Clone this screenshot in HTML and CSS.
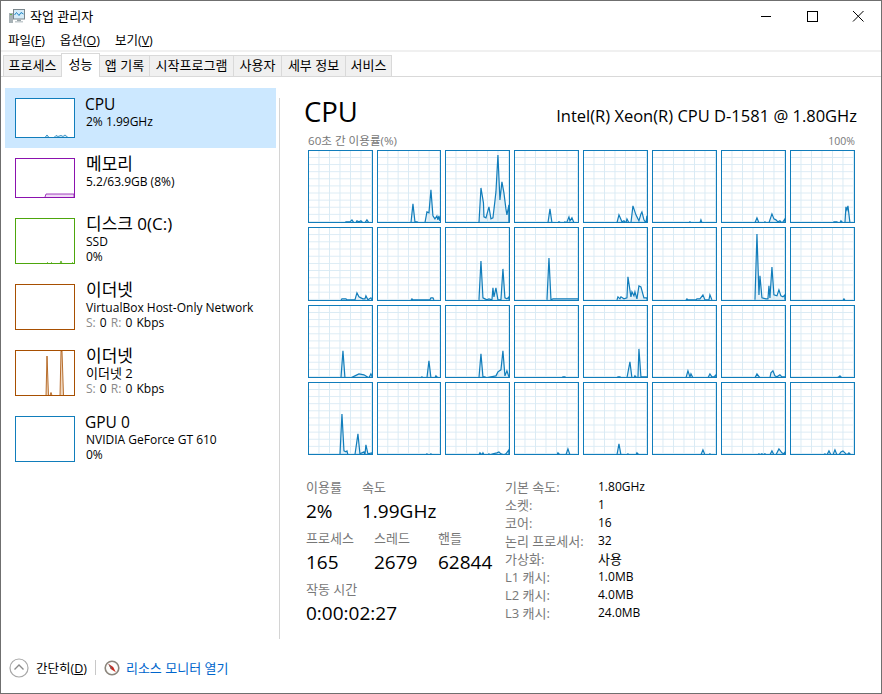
FILE: index.html
```html
<!DOCTYPE html>
<html lang="ko">
<head>
<meta charset="utf-8">
<title>작업 관리자</title>
<link rel="stylesheet" href="styles.css">
</head>
<body>
<div class="window">
  <header class="titlebar">
    <svg class="app-icon" viewBox="0 0 16 16" width="16" height="16">
      <rect x="0" y="5" width="4" height="10" fill="#a8b2b6"/>
      <rect x="1" y="6" width="2" height="1" fill="#5fae4b"/>
      <rect x="4.500" y="1.500" width="11" height="9.500" fill="#d6ecf8" stroke="#7b878d"/>
      <polyline points="5.500,7 7.500,4.500 10,7.500 12,4.500 14.500,6" fill="none" stroke="#1f86c6" stroke-width="1"/>
      <rect x="8" y="11.500" width="4" height="1.500" fill="#9aa5a9"/>
      <rect x="6" y="13" width="8" height="1.500" fill="#c4cccf"/>
    </svg>
    <span class="title-text">작업 관리자</span>
    <div class="win-buttons">
      <svg viewBox="0 0 46 30" width="46" height="30"><line x1="18" y1="15.5" x2="28" y2="15.5" stroke="#000"/></svg>
      <svg viewBox="0 0 46 30" width="46" height="30"><rect x="18.5" y="10.5" width="10" height="10" fill="none" stroke="#000"/></svg>
      <svg viewBox="0 0 46 30" width="46" height="30"><path d="M18 10l10.500 10.500M28.500 10L18 20.500" stroke="#000" fill="none"/></svg>
    </div>
  </header>
  <nav class="menubar">
    <span>파일(<u>F</u>)</span><span>옵션(<u>O</u>)</span><span>보기(<u>V</u>)</span>
  </nav>
  <div class="tabs">
    <span class="tab tab-1">프로세스</span>
    <span class="tab tab-2 active">성능</span>
    <span class="tab tab-3">앱 기록</span>
    <span class="tab tab-4">시작프로그램</span>
    <span class="tab tab-5">사용자</span>
    <span class="tab tab-6">세부 정보</span>
    <span class="tab tab-7">서비스</span>
  </div>
  <main class="main">
    <aside class="sidebar">
      <div class="item selected">
        <svg class="thumb thumb-cpu" viewBox="0 0 58 37.500" preserveAspectRatio="none"><polyline points="0,38 29,38 31,35.500 33,38 38,38 40,36 42,37 45,36 47,37 49,35.500 52,38 58,38" fill="#d8ebf5" stroke="#117dbb" stroke-width="0.8"/></svg>
        <div class="item-text"><div class="item-title">CPU</div><div class="item-sub">2% 1.99GHz</div></div>
      </div>
      <div class="item">
        <svg class="thumb thumb-mem" viewBox="0 0 58 38" preserveAspectRatio="none"><polyline points="29,38 30,35 58,35 58,38" fill="#f0dcf5" stroke="#8b12ae" stroke-width="0.8"/></svg>
        <div class="item-text"><div class="item-title ko">메모리</div><div class="item-sub">5.2/63.9GB (8%)</div></div>
      </div>
      <div class="item tall">
        <svg class="thumb thumb-disk" viewBox="0 0 58 43.500" preserveAspectRatio="none"><polyline points="0,44 31,44 31.500,43 32,44 35,44 35.500,43 36,44 44,44 45,41.500 46,44 56,44 56.500,43 57,44" fill="#dff0d0" stroke="#4da60c" stroke-width="0.8"/></svg>
        <div class="item-text"><div class="item-title ko">디스크 0(C:)</div><div class="item-sub">SSD</div><div class="item-sub">0%</div></div>
      </div>
      <div class="item tall">
        <svg class="thumb thumb-net" viewBox="0 0 58 44" preserveAspectRatio="none"></svg>
        <div class="item-text"><div class="item-title ko">이더넷</div><div class="item-sub">VirtualBox Host-Only Network</div><div class="item-sub rate"><span class="dim">S:</span> 0 <span class="dim">R:</span> 0 Kbps</div></div>
      </div>
      <div class="item tall">
        <svg class="thumb thumb-net" viewBox="0 0 58 43.500" preserveAspectRatio="none"><polyline points="30,44 31,5 32.500,44 34,44 35,41 36,44 44,44 45,0 46,0 47.500,44" fill="#f0d8c0" stroke="#a74f01" stroke-width="0.8"/></svg>
        <div class="item-text"><div class="item-title ko">이더넷</div><div class="item-sub sub-ko">이더넷 2</div><div class="item-sub rate"><span class="dim">S:</span> 0 <span class="dim">R:</span> 0 Kbps</div></div>
      </div>
      <div class="item tall">
        <svg class="thumb thumb-gpu" viewBox="0 0 58 44" preserveAspectRatio="none"></svg>
        <div class="item-text"><div class="item-title">GPU 0</div><div class="item-sub">NVIDIA GeForce GT 610</div><div class="item-sub">0%</div></div>
      </div>
    </aside>
    <section class="panel">
      <div class="panel-head">
        <h1>CPU</h1>
        <div class="cpu-name">Intel(R) Xeon(R) CPU D-1581 @ 1.80GHz</div>
      </div>
      <div class="axis"><span>60초 간 이용률(%)</span><span class="pct">100%</span></div>
      <div class="charts">
        <svg class="chart" viewBox="0 0 63 71.400" preserveAspectRatio="none"><polyline points="0,72 36,72 37,71 41,71 43,69 45,72 47,72 48,70 50,71 52,70 54,72 56,72 58,69 60,72" /></svg>
        <svg class="chart" viewBox="0 0 63 71.400" preserveAspectRatio="none"><polyline points="33,72 35,53 37,71 39,71 41,72 47,72 49,61 51,62 53,39 55,65 57,68 59,65 60,69 61,65 62,70 63,64 63,72" /></svg>
        <svg class="chart" viewBox="0 0 63 71.400" preserveAspectRatio="none"><polyline points="33,72 35,37 37.500,52 38,66 40,67 43,56 45,68 47,67 49,50 50,41 52,4 54,49 56,31 58,42 60,58 61,64 63,54 63,72" /></svg>
        <svg class="chart" viewBox="0 0 63 71.400" preserveAspectRatio="none"><polyline points="33,72 35,58 37,72 43,72 44,71 46,72 49,72 50,71 51,72 52,71 54,66 55,70 57,67 59,72" /></svg>
        <svg class="chart" viewBox="0 0 63 71.400" preserveAspectRatio="none"><polyline points="33,72 35,64 38,71 40,70 42,72 43,68 45,72 47,72 49,55 52,64 55,70 57,63 58,61 60,69 62,72 63,65 63,72" /></svg>
        <svg class="chart" viewBox="0 0 63 71.400" preserveAspectRatio="none"><polyline points="36,72 37,71 38,72 47,72 48,69 49,72" /></svg>
        <svg class="chart" viewBox="0 0 63 71.400" preserveAspectRatio="none"><polyline points="33,72 35,67 37,72 42,72 43,71 44,72 47,72 50,63 52,68 54,69 56,71 58,70 60,72 61,71 63,68 63,72" /></svg>
        <svg class="chart" viewBox="0 0 63 71.400" preserveAspectRatio="none"><polyline points="42,72 43,71 46,71 47,72 49,72 50,70 52,72 54,72 55,56 56,59 57,55 59,72" /></svg>

        <svg class="chart" viewBox="0 0 63 71.400" preserveAspectRatio="none"><polyline points="32,72 33,71 37,71 38,72 46,72 48,65 50,69 52,70 54,71 56,71 57,68 59,72 62,70 63,72" /></svg>
        <svg class="chart" viewBox="0 0 63 71.400" preserveAspectRatio="none"><polyline points="33,72 34,71 35,72 52,72 53,70 55,70 56,72" /></svg>
        <svg class="chart" viewBox="0 0 63 71.400" preserveAspectRatio="none"><polyline points="33,72 35,33 37,70 39,71 41,72 43,71 46,72 47,60 48,69 50,60 52,72 55,72 57,41 59,70 61,71 63,69 63,72" /></svg>
        <svg class="chart" viewBox="0 0 63 71.400" preserveAspectRatio="none"><polyline points="32,72 34,30 36,72 38,71 63,71 63,72" /></svg>
        <svg class="chart" viewBox="0 0 63 71.400" preserveAspectRatio="none"><polyline points="33,72 34,69 36,71 37,69 40,71 43,70 44,49 47,69 48,64 50,68 51,64 53,71 55,58 57,59 60,70 63,70 63,72" /></svg>
        <svg class="chart" viewBox="0 0 63 71.400" preserveAspectRatio="none"><polyline points="33,72 34,71 35,72 43,72 44,71 47,71 50,67 52,72 56,72 57,67 59,72" /></svg>
        <svg class="chart" viewBox="0 0 63 71.400" preserveAspectRatio="none"><polyline points="33,72 35,6 37,67 38,48 40,70 44,71 46,71 47,58 48,70 50,39 52,67 55,68 57,62 59,68 61,69 63,67 63,72" /></svg>
        <svg class="chart" viewBox="0 0 63 71.400" preserveAspectRatio="none"><polyline points="52,72 53,71 54,72" /></svg>

        <svg class="chart" viewBox="0 0 63 71.400" preserveAspectRatio="none"><polyline points="32,72 34,45 36,72 42,72 44,71 46,70 50,68 55,69 60,72 62,68 63,70 63,72" /></svg>
        <svg class="chart" viewBox="0 0 63 71.400" preserveAspectRatio="none"><polyline points="43,72 44,71 45,72 49,72 51,55 53,72 57,72 58,70 60,72" /></svg>
        <svg class="chart" viewBox="0 0 63 71.400" preserveAspectRatio="none"><polyline points="33,72 35,48 37,71 39,71 40,72 45,71 50,70 52,66 55,64 57,45 59,70 61,65 63,71 63,72" /></svg>
        <svg class="chart" viewBox="0 0 63 71.400" preserveAspectRatio="none"><polyline points="47,72 48,71 50,71 51,72" /></svg>
        <svg class="chart" viewBox="0 0 63 71.400" preserveAspectRatio="none"><polyline points="33,72 34,71 36,71 37,72 43,72 46,56 48,72 50,72 51,70 53,72 54,72 55,43 57,71 63,71 63,72" /></svg>
        <svg class="chart" viewBox="0 0 63 71.400" preserveAspectRatio="none"><polyline points="33,72 35,65 37,71 38,68 40,72 55,72 57,68 59,71 61,71 63,69 63,72" /></svg>
        <svg class="chart" viewBox="0 0 63 71.400" preserveAspectRatio="none"><polyline points="33,72 35,68 38,72 48,72 49,67 51,65 53,70 55,71 58,69 60,71 63,71 63,72" /></svg>
        <svg class="chart" viewBox="0 0 63 71.400" preserveAspectRatio="none"><polyline points="46,72 48,71 49,70 50,71 51,72" /></svg>

        <svg class="chart" viewBox="0 0 63 71.400" preserveAspectRatio="none"><polyline points="31,72 33,31 35,68 37,69 38,68 39,72 46,72 49,51 51,71 53,70 55,69 56,72 57,62 59,71 63,70 63,72" /></svg>
        <svg class="chart" viewBox="0 0 63 71.400" preserveAspectRatio="none"><polyline points="48,72 49,71 50,72 52,72 53,71 54,72" /></svg>
        <svg class="chart" viewBox="0 0 63 71.400" preserveAspectRatio="none"><polyline points="33,72 34,70 36,72 37,70 38,72 42,72 43,71 44,72 47,71 51,70 53,69 55,71 58,72 60,71 63,67 63,72" /></svg>
        <svg class="chart" viewBox="0 0 63 71.400" preserveAspectRatio="none"><polyline points="42,72 43,70 45,72 51,72 53,66 55,72" /></svg>
        <svg class="chart" viewBox="0 0 63 71.400" preserveAspectRatio="none"><polyline points="33,72 35,61 37,72 43,72 44,71 45,72 52,72 53,70 55,72" /></svg>
        <svg class="chart" viewBox="0 0 63 71.400" preserveAspectRatio="none"><polyline points="48,72 50,67 52,72 56,72 57,71 58,72" /></svg>
        <svg class="chart" viewBox="0 0 63 71.400" preserveAspectRatio="none"><polyline points="36,72 37,71 38,72 40,71 41,72 43,71 44,72 48,72 50,68 52,72 54,72 57,66 60,70 62,71 63,69 63,72" /></svg>
        <svg class="chart" viewBox="0 0 63 71.400" preserveAspectRatio="none"><polyline points="33,72 34,71 35,72 36,72 38,68 40,72 42,72 44,67 46,72 48,72 50,69 52,68 54,70 56,72 58,70 60,72" /></svg>
      </div>
      <div class="stats">
        <div class="stats-left">
          <div class="stat-row">
            <div class="stat stat-usage"><div class="stat-label">이용률</div><div class="stat-value">2%</div></div>
            <div class="stat"><div class="stat-label">속도</div><div class="stat-value">1.99GHz</div></div>
          </div>
          <div class="stat-row">
            <div class="stat stat-proc"><div class="stat-label">프로세스</div><div class="stat-value">165</div></div>
            <div class="stat stat-thread"><div class="stat-label">스레드</div><div class="stat-value">2679</div></div>
            <div class="stat"><div class="stat-label">핸들</div><div class="stat-value">62844</div></div>
          </div>
          <div class="stat-row">
            <div class="stat"><div class="stat-label">작동 시간</div><div class="stat-value">0:00:02:27</div></div>
          </div>
        </div>
        <dl class="specs">
          <dt>기본 속도:</dt><dd>1.80GHz</dd>
          <dt>소켓:</dt><dd>1</dd>
          <dt>코어:</dt><dd>16</dd>
          <dt>논리 프로세서:</dt><dd>32</dd>
          <dt>가상화:</dt><dd class="dd-ko">사용</dd>
          <dt>L1 캐시:</dt><dd>1.0MB</dd>
          <dt>L2 캐시:</dt><dd>4.0MB</dd>
          <dt>L3 캐시:</dt><dd>24.0MB</dd>
        </dl>
      </div>
    </section>
  </main>
  <footer class="footer">
    <svg class="chevron" viewBox="0 0 20 20" width="20" height="20"><circle cx="10" cy="10" r="9" fill="#fff" stroke="#a8a8a8" stroke-width="1.200"/><polyline points="5.500,11.500 10,7 14.500,11.500" fill="none" stroke="#8a8a8a" stroke-width="1.400"/></svg>
    <span class="less">간단히(<u>D</u>)</span>
    <span class="sep"></span>
    <svg class="compass" viewBox="0 0 16 16" width="16" height="16"><circle cx="8" cy="8" r="6.800" fill="#fdfdfb" stroke="#8b857c" stroke-width="1.600"/><path d="M4.300 3.800L9.200 7 11.800 12.300 6.800 9z" fill="#c8281e"/><path d="M4.300 3.800L6.800 9 8 8z" fill="#6b6b6b"/></svg>
    <span class="monitor-link">리소스 모니터 열기</span>
  </footer>
</div>
</body>
</html>
```
FILE: styles.css
```css
* { box-sizing: border-box; }
html, body { margin: 0; padding: 0; background: #fff; }
body {
  width: 882px;
  height: 694px;
  overflow: hidden;
  font-family: "Open Sans", "Noto Sans CJK KR", sans-serif;
  color: #000;
}
.window {
  width: 882px;
  height: 694px;
  display: flex;
  flex-direction: column;
  border: 1px solid #6f6f6f;
  background: #fff;
}
.titlebar {
  display: flex;
  align-items: center;
  height: 30px;
  flex: none;
  padding-left: 8px;
  font-size: 13px;
}
.app-icon { margin-right: 5px; }
.title-text { line-height: 30px; }
.win-buttons { margin-left: auto; display: flex; }
.win-buttons svg { display: block; }
.menubar {
  display: flex;
  gap: 15px;
  height: 19px;
  flex: none;
  padding-left: 7px;
  font-size: 12.500px;
  line-height: 19px;
  border-bottom: 2px solid #f0f0f0;
  box-sizing: content-box;
}
.tabs {
  display: flex;
  align-items: flex-end;
  height: 25px;
  flex: none;
  padding-left: 2px;
  border-bottom: 1px solid #d9d9d9;
  font-size: 13px;
}
.tab {
  height: 21px;
  line-height: 18px;
  text-align: center;
  white-space: nowrap;
  background: #f0f0f0;
  border: 1px solid #d9d9d9;
  border-bottom: 0;
  margin-left: -1px;
}
.tab-1 { width: 59px; margin-left: 0; }
.tab-2 { width: 39px; }
.tab-3 { width: 51px; }
.tab-4 { width: 85px; }
.tab-5 { width: 49px; }
.tab-6 { width: 65px; }
.tab-7 { width: 47px; }
.tab.active {
  background: #fff;
  height: 24px;
  line-height: 21px;
  position: relative;
  margin-bottom: -1px;
}
.main { display: flex; flex: 1; min-height: 0; }
.sidebar {
  width: 279px;
  flex: none;
  padding: 11px 0 0 4px;
  position: relative;
}
.sidebar::after {
  content: "";
  position: absolute;
  right: 0;
  top: 21px;
  bottom: 2px;
  width: 1px;
  background: #d4d4d4;
}
.item {
  display: flex;
  gap: 10px;
  width: 271px;
  height: 60px;
  padding: 10px 0 0 10px;
}
.item.tall { height: 66px; }
.item.selected { background: #cce8ff; }
.thumb {
  display: block;
  width: 60px;
  height: 40px;
  flex: none;
  border: 1px solid;
  background: #fff;
}
.tall .thumb { height: 46px; }
.thumb-cpu { border-color: #117dbb; }
.thumb-mem { border-color: #8b12ae; }
.thumb-disk { border-color: #4da60c; }
.thumb-net { border-color: #a74f01; }
.thumb-gpu { border-color: #117dbb; }
.item-text { margin-top: -4px; }
.item-title { font-size: 15.500px; line-height: 20px; }
.item-title.ko { font-size: 17px; margin-left: 1px; }
.item-sub { font-size: 12px; line-height: 15px; margin-left: 1px; }
.sub-ko { font-size: 13px; }
.rate { word-spacing: 1px; }
.dim { color: #8a8a8a; }
.panel {
  flex: 1;
  min-width: 0;
  padding-left: 24px;
  padding-right: 26px;
  display: flex;
  flex-direction: column;
}
.panel-head {
  display: flex;
  justify-content: space-between;
  align-items: baseline;
  height: 46px;
  padding-top: 17px;
}
.panel-head h1 {
  margin: 0;
  font-weight: 400;
  font-size: 27.500px;
  line-height: 36px;
}
.cpu-name { font-size: 16.500px; margin-right: -2px; white-space: nowrap; }
.axis {
  display: flex;
  justify-content: space-between;
  margin-top: 10px;
  padding-left: 4px;
  height: 17px;
  font-size: 11.600px;
  line-height: 16px;
  color: #787878;
}
.pct { font-size: 10.500px; }
.charts {
  display: grid;
  grid-template-columns: repeat(8, 1fr);
  grid-template-rows: repeat(4, 1fr);
  gap: 4px;
  height: 305px;
  margin-left: 3.600px;
}
.chart {
  display: block;
  width: 100%;
  height: 100%;
  border: 1px solid #117dbb;
  background-color: #fff;
  background-image:
    linear-gradient(to right, #d9eaf4 1.300px, transparent 1.300px),
    linear-gradient(to bottom, #d9eaf4 1.300px, transparent 1.300px);
  background-size: 16.667% 10%;
  background-position: -1px -1px;
}
.chart polyline {
  fill: rgba(17, 125, 187, 0.1);
  stroke: #117dbb;
  stroke-width: 1.200;
  vector-effect: non-scaling-stroke;
}
.stats {
  display: flex;
  margin-top: 23px;
  padding-left: 2px;
}
.stats-left { width: 199px; flex: none; }
.stat-row { display: flex; height: 51px; }
.stat { white-space: nowrap; flex: none; }
.stat-usage { width: 56px; }
.stat-proc { width: 68px; }
.stat-thread { width: 64px; }
.stat-label { font-size: 13px; line-height: 18px; color: #787878; }
.stat-value { font-size: 19px; line-height: 28px; margin-top: 1px; }
.specs {
  display: grid;
  grid-template-columns: 93px auto;
  grid-auto-rows: 18px;
  margin: 0;
  font-size: 13px;
  line-height: 18px;
}
.specs dt { color: #787878; white-space: nowrap; }
.specs dd { margin: 0; font-size: 12px; }
.specs .dd-ko { font-size: 13px; }
.footer {
  flex: none;
  display: flex;
  align-items: center;
  height: 52px;
  padding: 1px 0 0 8px;
  font-size: 12.500px;
}
.less { margin-left: 7px; }
.sep { width: 1px; height: 15px; background: #c8c8c8; margin: 0 8px 0 8px; }
.monitor-link { color: #0066cc; margin-left: 6px; font-size: 13px; }
```
